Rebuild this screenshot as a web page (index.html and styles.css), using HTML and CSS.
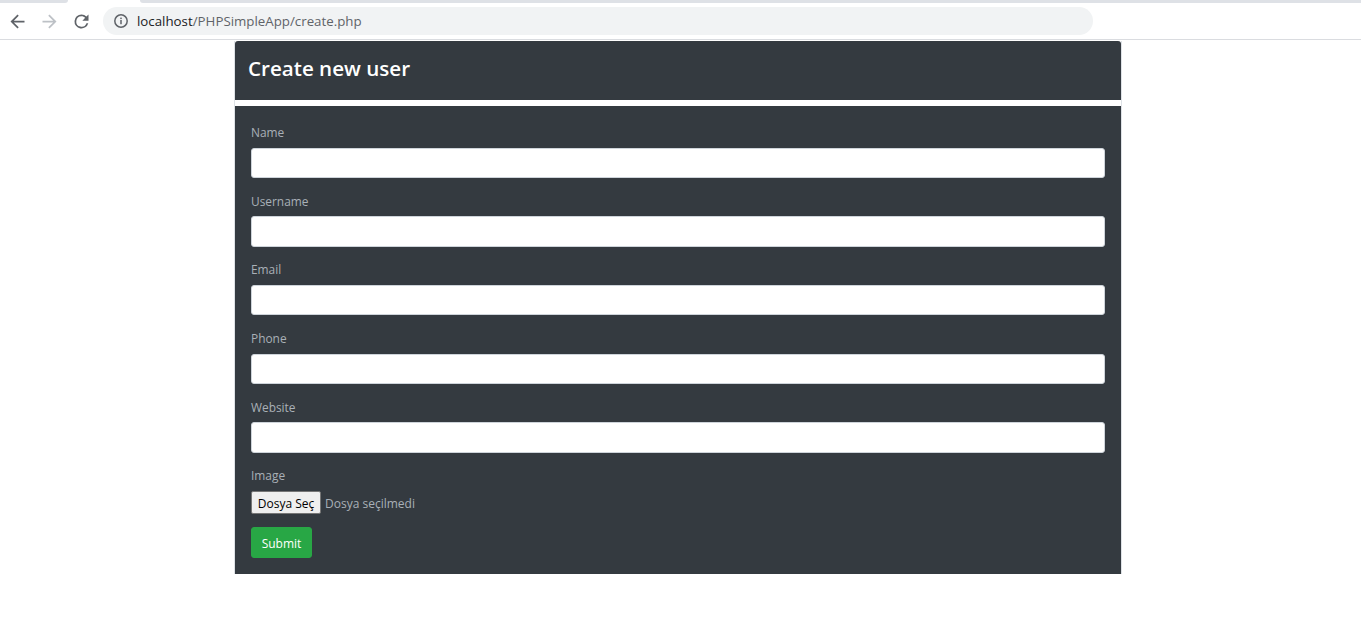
FILE: index.html
```
<!DOCTYPE html>
<html lang="tr">
<head>
<meta charset="utf-8">
<title>Create new user</title>
<link rel="stylesheet" href="styles.css">
</head>
<body>
<div class="tabstrip">
  <div class="strip-left"></div>
  <div class="strip-tab"></div>
  <div class="strip-right"></div>
</div>
<header class="toolbar">
  <svg class="nav-icon" viewBox="0 0 24 24"><path fill="#5f6368" d="M20 11H7.83l5.59-5.59L12 4l-8 8 8 8 1.41-1.41L7.83 13H20z"/></svg>
  <svg class="nav-icon" viewBox="0 0 24 24"><path fill="#bdc1c6" d="M4 11h12.17l-5.59-5.59L12 4l8 8-8 8-1.41-1.41L16.17 13H4z"/></svg>
  <svg class="nav-icon" viewBox="0 0 24 24"><path fill="#5f6368" d="M17.65 6.35A7.96 7.96 0 0 0 12 4a8 8 0 1 0 7.75 10h-2.08A6 6 0 1 1 12 6c1.66 0 3.14.69 4.22 1.78L13 11h7V4z"/></svg>
  <div class="omnibox">
    <svg class="info-icon" viewBox="0 0 16 16"><circle cx="8" cy="8" r="6.2" fill="none" stroke="#5f6368" stroke-width="1.5"/><rect x="7.25" y="7" width="1.5" height="4.2" fill="#5f6368"/><rect x="7.25" y="4.6" width="1.5" height="1.5" fill="#5f6368"/></svg>
    <span class="url"><span class="host">localhost</span>/PHPSimpleApp/create.php</span>
  </div>
</header>
<main class="page">
  <div class="card-head"><h3 class="title">Create new user</h3></div>
  <form class="card-body">
    <div class="group"><label class="label">Name</label><input class="control" type="text"></div>
    <div class="group"><label class="label">Username</label><input class="control" type="text"></div>
    <div class="group"><label class="label">Email</label><input class="control" type="text"></div>
    <div class="group"><label class="label">Phone</label><input class="control" type="text"></div>
    <div class="group"><label class="label">Website</label><input class="control" type="text"></div>
    <div class="group"><label class="label">Image</label>
      <div class="file-row"><button class="file-btn" type="button">Dosya Seç</button><span class="file-name">Dosya seçilmedi</span></div>
    </div>
    <button class="submit" type="button">Submit</button>
  </form>
</main>
</body>
</html>
```
FILE: styles.css
```
* { box-sizing: border-box; }
html, body { margin: 0; padding: 0; background: #fff; }
body { font-family: "Open Sans", "Noto Sans", sans-serif; height: 641px; overflow: hidden; }

.tabstrip { display: flex; height: 3px; background: #fff; }
.strip-left { width: 68px; background: #dee1e6; border-bottom-right-radius: 4px; }
.strip-tab { width: 72px; background: #fff; }
.strip-right { flex: 1; background: #dee1e6; border-bottom-left-radius: 4px; }

.toolbar { display: flex; align-items: center; height: 37px; padding: 0 0 0 6.5px; background: #fff; border-bottom: 1px solid #dadce0; }
.nav-icon { width: 21px; height: 21px; margin-right: 11px; flex: none; }
.omnibox { display: flex; align-items: center; width: 990px; height: 28px; margin-left: 0.5px; padding-left: 10px; background: #f1f3f4; border-radius: 14px; }
.info-icon { width: 16px; height: 16px; margin-right: 8px; flex: none; }
.url { font-size: 13.3px; color: #5f6368; white-space: nowrap; }
.host { color: #202124; }

.page { width: 888px; margin: 1px 0 0 234px; border-right: 1px solid #dee2e6; border-left: 1px solid #dee2e6; }
.card-head { height: 59px; padding: 0 13px 5px; display: flex; align-items: center; background: #343a40; border-radius: 3px 3px 0 0; }
.title { margin: 0; font-size: 20.6px; font-weight: 600; color: #fff; line-height: 1.2; }
.card-body { margin-top: 6px; height: 468px; padding: 16px 16px 16px; background: #343a40; }
.group { margin-bottom: 12.7px; }
.label { display: block; height: 19.2px; margin-bottom: 6.4px; font-size: 11.9px; line-height: 21.8px; color: #a9b0b7; }
.control { display: block; width: 100%; height: 30.4px; padding: 0; background: #fff; border: 1px solid #ced4da; border-radius: 3px; }
.file-row { display: flex; align-items: center; height: 23px; }
.file-btn { width: 70px; height: 23px; padding: 2px 0 0; margin-right: 4px; font-family: inherit; font-size: 12px; color: #000; background: #efefef; border: 1px solid #767676; border-radius: 2px; }
.file-name { padding-top: 2px; font-size: 12px; color: #a9b0b7; }
.submit { display: block; width: 61px; height: 31px; padding: 2px 0 0; font-family: inherit; font-size: 12px; color: #fff; background: #28a745; border: 1px solid #28a745; border-radius: 3px; }
```
